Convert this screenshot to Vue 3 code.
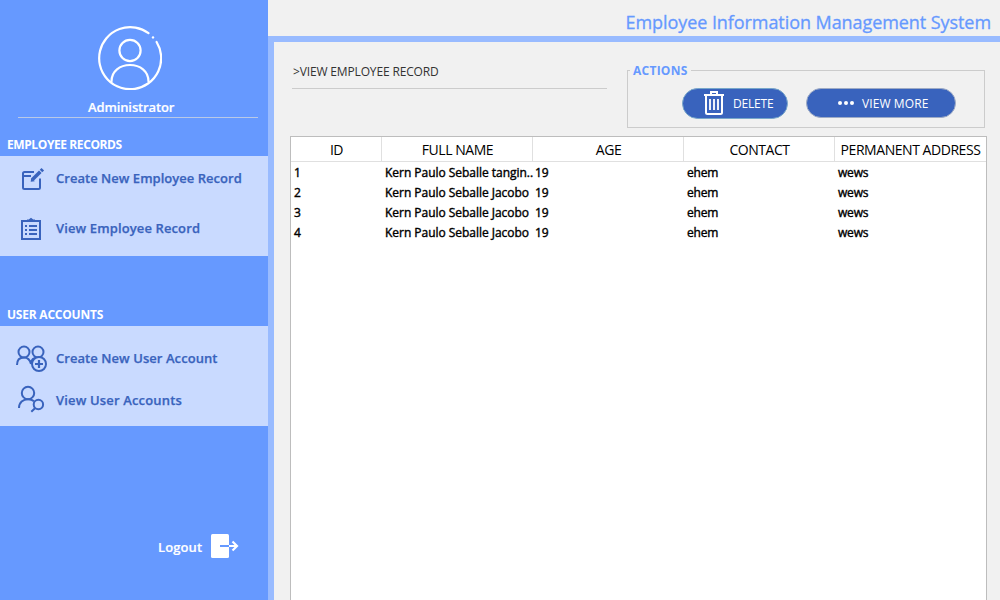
<script setup>
const columns = ['ID', 'FULL NAME', 'AGE', 'CONTACT', 'PERMANENT ADDRESS']
const rows = [
  ['1', 'Kern Paulo Seballe tangin..', '19', 'ehem', 'wews'],
  ['2', 'Kern Paulo Seballe Jacobo', '19', 'ehem', 'wews'],
  ['3', 'Kern Paulo Seballe Jacobo', '19', 'ehem', 'wews'],
  ['4', 'Kern Paulo Seballe Jacobo', '19', 'ehem', 'wews'],
]
</script>

<template>
  <div class="app">
    <aside class="side">
      <div class="profile">
        <svg class="avatar" width="64" height="64" viewBox="0 0 64 64" fill="none" stroke="#fff" stroke-width="2.2" stroke-linecap="round">
          <path d="M50.5 7.2A31 31 0 1 0 58.6 16" />
          <circle cx="32" cy="24.5" r="10.6" />
          <path d="M13.5 55.5C13.5 45 22 39 32 39S50.500 45 50.500 55.500" />
          <circle cx="55" cy="11.400" r="1.200" fill="#fff" stroke="none" />
        </svg>
        <div class="role"><span>Administrator</span></div>
      </div>
      <h2 class="group">EMPLOYEE RECORDS</h2>
      <nav class="menu records">
        <a class="item">
          <svg width="32" height="32" viewBox="0 0 32 32" fill="none" stroke="#3963bd" stroke-width="2">
            <path d="M18 8H8.500Q7 8 7 9.500V23.500Q7 25 8.500 25H22.500Q24 25 24 23.500V14.500M7 12H15" />
            <path d="M16.500 15.500L24.300 7.700" stroke-width="3.600" />
            <path d="M25 7L26.800 5.200" stroke-width="3.600" />
            <path d="M14.700 17.800L15.200 13.700L18.800 17.300Z" fill="#3963bd" stroke="none" />
          </svg>
          <span class="t1">Create New Employee Record</span>
        </a>
        <a class="item">
          <svg width="32" height="32" viewBox="0 0 32 32" fill="none" stroke="#3963bd" stroke-width="2">
            <path d="M6 7H24V25H6ZM11 6.500H13L15 5L17 6.500H19" />
            <path d="M9 12H11M9 16H11M9 20H11M13 12H21M13 16H21M13 20H21" />
          </svg>
          <span class="t2">View Employee Record</span>
        </a>
      </nav>
      <h2 class="group second">USER ACCOUNTS</h2>
      <nav class="menu users">
        <a class="item">
          <svg width="32" height="32" viewBox="0 0 32 32" fill="none" stroke="#3963bd" stroke-width="2">
            <circle cx="8" cy="10" r="5.500" /><circle cx="22" cy="10" r="5.500" />
            <path d="M1 23C1 17.500 4 15.600 8 15.600C12 15.600 14 18 15 22M15 21C15.500 17.500 18 15.700 21 15.700" />
            <circle cx="23" cy="22" r="7" fill="#c9daff" />
            <path d="M23 18V26M19 22H27" stroke-width="2.200" />
          </svg>
          <span class="t3">Create New User Account</span>
        </a>
        <a class="item">
          <svg width="32" height="32" viewBox="0 0 32 32" fill="none" stroke="#3963bd" stroke-width="2">
            <circle cx="12" cy="9" r="6.200" />
            <path d="M3 24C3 18.500 7 15.300 12 15.300C14.500 15.300 16.500 16 18 17.300M19 24.200L15.300 27.800" />
            <circle cx="22.400" cy="20.500" r="4.700" />
          </svg>
          <span class="t4">View User Accounts</span>
        </a>
      </nav>
      <a class="logout">
        <span>Logout</span>
        <svg width="28" height="24" viewBox="0 0 28 24">
          <rect width="18" height="24" rx="1.500" fill="#fff" />
          <path d="M9 12H18" stroke="#6699ff" stroke-width="2" />
          <path d="M18 12H26M21.500 7.500L26 12L21.500 16.500" fill="none" stroke="#fff" stroke-width="2.200" />
        </svg>
      </a>
    </aside>
    <main class="main">
      <header class="top"><h1>Employee Information Management System</h1></header>
      <section class="body">
        <div class="tools">
          <div class="crumb"><span>&gt;VIEW EMPLOYEE RECORD</span></div>
          <div class="actions">
            <span class="legend">ACTIONS</span>
            <button class="del">
              <svg width="20" height="24" viewBox="0 0 20 24" fill="none" stroke="#fff" stroke-width="2">
                <path d="M0 4H20M7 4V1H13V4M2 4V21.500Q2 23 3.500 23H16.500Q18 23 18 21.500V4" />
                <path d="M6 8V19M10 8V19M14 8V19" stroke-width="1.800" />
              </svg>
              <span>DELETE</span>
            </button>
            <button class="more">
              <svg width="16" height="4" viewBox="0 0 16 4" fill="#fff"><circle cx="2" cy="2" r="2" /><circle cx="8" cy="2" r="2" /><circle cx="14" cy="2" r="2" /></svg>
              <span>VIEW MORE</span>
            </button>
          </div>
        </div>
        <div class="table">
          <div class="head"><div v-for="c in columns" :key="c">{{ c }}</div></div>
          <div v-for="r in rows" :key="r[0]" class="row"><div v-for="(v, i) in r" :key="i" :class="'c' + i">{{ v }}</div></div>
        </div>
      </section>
    </main>
  </div>
</template>

<style scoped>
* { box-sizing: border-box; }
.app { display: flex; width: 1000px; height: 600px; overflow: hidden; background: #f1f1f1; font-family: "Open Sans", "Noto Sans", sans-serif; white-space: nowrap; }
h1, h2 { margin: 0; }
.side { width: 268px; flex: none; background: #6699ff; display: flex; flex-direction: column; color: #fff; }
.profile { height: 118px; margin: 0 10px 0 18px; border-bottom: 1px solid #b9c9e6; padding-top: 26px; }
.avatar { display: block; margin-left: 80px; }
.role { margin-left: 70px; font-size: 13px; font-weight: 600; line-height: 18px; padding-top: 8px; letter-spacing: -.12px; -webkit-text-stroke: .2px; }
.group { height: 38px; padding: 17px 0 0 7px; font-size: 12px; line-height: 20px; font-weight: 700; letter-spacing: -.4px; }
.second { height: 70px; padding-top: 49px; letter-spacing: -.22px; }
.menu { height: 100px; background: #c9daff; color: #3963bd; padding: 0 0 0 16px; }
.item { display: flex; align-items: center; gap: 8px; font-size: 13px; font-weight: 600; line-height: 18px; -webkit-text-stroke: .25px; }
.item svg { flex: none; }
.t1 { letter-spacing: .03px; }
.t2 { letter-spacing: .12px; }
.t3 { letter-spacing: .06px; }
.t4 { letter-spacing: .16px; }
.records .item { height: 50px; padding-bottom: 5px; }
.records svg { margin-top: 3px; }
.t1, .t2 { margin-top: -2px; }
.users { padding-top: 11px; }
.users .item { height: 42px; }
.logout { display: flex; align-items: center; gap: 8px; margin: 108px 0 0 158px; font-size: 13px; font-weight: 600; height: 24px; letter-spacing: .1px; -webkit-text-stroke: .2px; }
.logout span { width: 45px; padding-top: 1px; }
.main { width: 732px; display: flex; flex-direction: column; }
.top { height: 42px; flex: none; border-bottom: 6px solid #99bbff; padding: 10px 9px 0 0; text-align: right; }
h1 { font-size: 18px; line-height: 25px; font-weight: 400; color: #6699ff; letter-spacing: -.07px; -webkit-text-stroke: .3px #6699ff; }
.body { flex: 1; border-left: 6px solid #99bbff; padding: 0 13px 0 16px; }
.tools { height: 94px; display: flex; justify-content: space-between; padding: 0 2px; }
.crumb { width: 315px; height: 47px; border-bottom: 1px solid #ccc; padding: 20px 0 0 1px; font-size: 12px; line-height: 20px; color: #333; letter-spacing: -.15px; }
.actions { position: relative; width: 358px; height: 58px; margin-top: 28px; border: 1px solid #ccc; display: flex; gap: 18px; padding: 17px 0 0 54px; }
.legend { position: absolute; left: 2px; top: -10px; padding: 0 3px; background: #f1f1f1; color: #6699ff; font-size: 12px; font-weight: 700; line-height: 20px; letter-spacing: .25px; }
button { display: flex; align-items: center; background: #3963bd; color: #fff; border: 1px solid #78a7ca; border-radius: 16px; padding: 0; font: 12px/18px "Open Sans", sans-serif; height: 31px; }
button span { padding-top: 1px; }
.del { width: 106px; padding-left: 21px; gap: 9px; letter-spacing: -.2px; }
.del svg { margin-top: -1px; }
.more { width: 150px; height: 30px; border-color: #9eabc5; padding-left: 31px; gap: 8px; letter-spacing: .1px; }
.table { width: 697px; height: 480px; border: 1px solid #bdbdbd; background: #fff; color: #000; }
.head, .row { display: grid; grid-template-columns: 91px 151px 151px 151px 151px; }
.head { height: 25px; border-bottom: 1px solid #e0e0e0; font-size: 14px; line-height: 26px; text-align: center; letter-spacing: -.45px; margin-bottom: 1px; }
.head div { height: 24px; }
.head div + div { border-left: 1px solid #e0e0e0; margin-left: -1px; }
.row { height: 20px; line-height: 20px; font-size: 12px; font-weight: 400; -webkit-text-stroke: .4px #000; padding-left: 3px; letter-spacing: -.03px; }
.c2 { margin-left: -1px; letter-spacing: -.2px; }
.c3, .c4 { letter-spacing: -.2px; }
</style>
